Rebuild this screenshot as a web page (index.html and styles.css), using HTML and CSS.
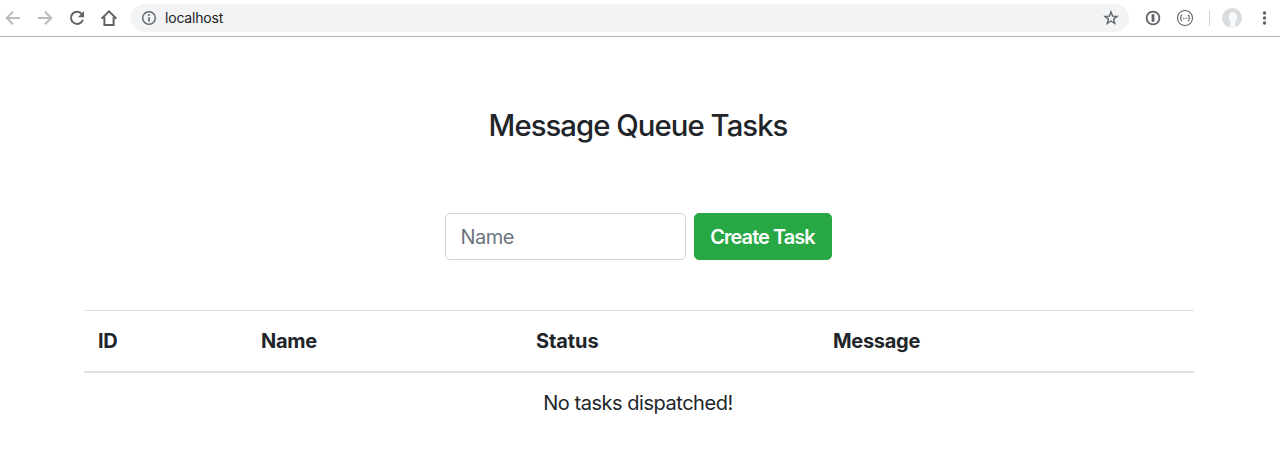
FILE: index.html
```html
<!DOCTYPE html>
<html lang="en">
<head>
<meta charset="utf-8">
<title>Message Queue Tasks</title>
<link rel="stylesheet" href="styles.css">
</head>
<body>
<header class="toolbar">
  <nav class="nav">
    <svg class="icon muted" viewBox="0 0 18 18"><path d="M16 9H3M9 2.700 2.700 9 9 15.300"/></svg>
    <svg class="icon muted" viewBox="0 0 18 18"><path d="M2 9h13M9 2.700 15.300 9 9 15.300"/></svg>
    <svg class="icon" viewBox="0 0 18 18"><path d="M14.200 5.400A6.100 6.100 0 1 0 14.900 10.700"/><path class="solid" d="M16 2v6.200H9.800z"/></svg>
    <svg class="icon" viewBox="0 0 18 18"><path d="M1.600 9.600 9 2.400l7.400 7.200M4.400 8v8.100h9.200V8"/></svg>
  </nav>
  <div class="address">
    <svg class="icon thin" viewBox="0 0 18 18"><circle cx="9" cy="9" r="6.300"/><path class="stem" d="M9 8.200v4.200M9 5.300v1.600"/></svg>
    <span class="url">localhost</span>
    <svg class="icon star" viewBox="0 0 18 18"><path d="m9 2.900 1.600 4.200 4.500.2-3.500 2.800 1.200 4.400L9 12l-3.800 2.500 1.200-4.400-3.500-2.800 4.500-.2z"/></svg>
  </div>
  <div class="extensions">
    <svg class="icon lock" viewBox="0 0 18 18"><circle cx="9" cy="9" r="6.400"/><path class="keyhole" d="M9 5.200v7.600"/></svg>
    <svg class="icon braces" viewBox="0 0 18 18"><circle cx="9" cy="9" r="7.500"/><path d="M6.200 6.100q-1.200 0-1.200 1.100v.9l-.8.900.8.900v.9q0 1.100 1.200 1.100M11.800 6.100q1.200 0 1.200 1.100v.9l.8.900-.8.900v.9q0 1.100-1.200 1.100M6.900 9.400h.9M8.600 9.400h.9M10.300 9.400h.9"/></svg>
    <span class="divider"></span>
    <svg class="avatar" viewBox="0 0 20 20"><circle cx="10" cy="10" r="10" fill="#dadbdc"/><path d="M10.600 4C7.900 4 6.600 6.200 6.700 9c.1 2.600.8 4.300 2 5.200 0 2.200-.6 3.600-2 4.900 2 .9 5 .9 6.800 0l-.3-4.600c1.200-.8 1.900-2.800 1.900-5.300C15.100 6 13.500 4 10.600 4z" fill="#f6f9fb"/></svg>
    <svg class="icon menu" viewBox="0 0 18 18"><circle cx="8.500" cy="4" r="1.700"/><circle cx="8.500" cy="9" r="1.700"/><circle cx="8.500" cy="14" r="1.700"/></svg>
  </div>
</header>
<main class="container">
  <h1 class="title">Message Queue Tasks</h1>
  <form class="task-form">
    <input class="field" type="text" placeholder="Name" aria-label="Name">
    <button class="button" type="button">Create Task</button>
  </form>
  <table class="tasks">
    <colgroup><col class="col-id"><col class="col-name"><col class="col-status"><col></colgroup>
    <thead><tr><th>ID</th><th>Name</th><th class="status">Status</th><th>Message</th></tr></thead>
    <tbody><tr><td class="empty" colspan="4">No tasks dispatched!</td></tr></tbody>
  </table>
</main>
</body>
</html>
```
FILE: styles.css
```css
* { box-sizing: border-box; }
body {
  margin: 0;
  background: #fff;
  color: #212529;
  font: 20px/30px Inter, "Liberation Sans", sans-serif;
}
.toolbar {
  display: flex;
  align-items: center;
  height: 37px;
  padding-left: 4px;
  border-bottom: 1px solid #b3b3b3;
}
.nav { display: flex; gap: 14px; width: 127px; }
.icon {
  display: block;
  flex: none;
  width: 18px;
  height: 18px;
  fill: none;
  stroke: #5f6368;
  stroke-width: 2;
}
.muted { stroke: #babcbe; }
.solid { fill: #5f6368; stroke: none; }
.thin { stroke-width: 1.4; }
.stem { stroke-width: 1.7; }
.star { stroke-width: 1.4; margin-left: auto; }
.lock { stroke-width: 1.8; }
.keyhole { stroke-width: 2.8; }
.braces { stroke-width: 1.1; }
.menu { fill: #5f6368; stroke: none; }
.address {
  display: flex;
  align-items: center;
  width: 998px;
  height: 28px;
  padding: 0 9px;
  border-radius: 14px;
  background: #f1f3f4;
}
.url {
  margin-left: 7px;
  color: #202124;
  font-size: 14px;
  line-height: 20px;
  letter-spacing: -0.2px;
}
.extensions { display: flex; align-items: center; margin-left: 15px; }
.extensions .braces { margin-left: 14px; }
.divider { width: 1px; height: 16px; margin: 0 12px 0 15px; background: #cfd1d3; }
.avatar { display: block; width: 20px; height: 20px; }
.extensions .menu { margin-left: 14px; }
.container { width: 1110px; margin: 0 0 0 84px; padding-top: 71px; }
.title {
  margin: 0;
  padding-right: 2px;
  font-size: 29.3px;
  font-weight: 500;
  line-height: 36px;
  letter-spacing: -0.95px;
  text-align: center;
}
.task-form { display: flex; justify-content: center; gap: 8px; margin: 69px 0 50px; padding-right: 2px; }
.field, .button {
  height: 47px;
  margin: 0;
  border-radius: 5px;
  font: inherit;
}
.field {
  width: 241px;
  padding: 0 15px;
  border: 1px solid #ced4da;
  background: #fff;
  letter-spacing: -0.5px;
}
.field::placeholder { color: #6c757d; opacity: 1; }
.button {
  width: 138px;
  padding: 0;
  border: 1px solid #28a745;
  background: #28a745;
  color: #fff;
  font-weight: 600;
  letter-spacing: -0.95px;
}
.tasks { width: 100%; border-collapse: separate; border-spacing: 0; table-layout: fixed; }
.col-id { width: 163px; }
.col-name { width: 275px; }
.col-status { width: 297px; }
.tasks th, .tasks td { padding: 15px 14px; }
.tasks th {
  border-top: 1px solid #dee2e6;
  border-bottom: 2px solid #dee2e6;
  font-weight: 700;
  letter-spacing: -0.3px;
  text-align: left;
}
.tasks .status { letter-spacing: -0.1px; }
.tasks .empty { padding-right: 16px; text-align: center; letter-spacing: -0.47px; }
```
